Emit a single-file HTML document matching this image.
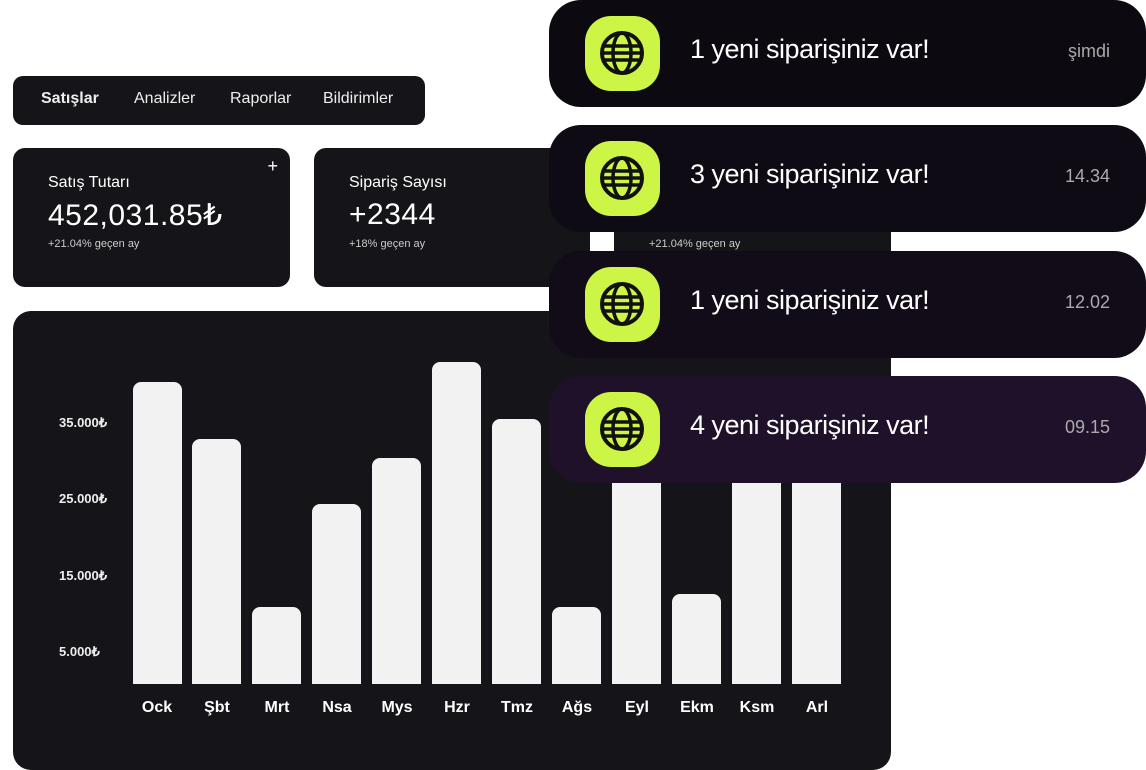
<!DOCTYPE html>
<html><head><meta charset="utf-8"><style>
*{margin:0;padding:0;box-sizing:border-box}
body{width:1146px;height:770px;background:#fff;position:relative;overflow:hidden;font-family:"Liberation Sans",sans-serif;color:#fff}
.abs{position:absolute}
.dk{background:#151419}
.tabs{left:13px;top:76px;width:412px;height:49px;border-radius:10px}
.tabs span{position:absolute;top:14px;font-size:16px;color:#eee}
.card{top:148px;height:139px;width:277px;border-radius:12px}
.card .t{position:absolute;left:35px;top:26px;font-size:16px}
.card .v{position:absolute;left:35px;top:50px;font-size:30px;letter-spacing:0.5px}
.card .s{position:absolute;left:35px;top:90px;font-size:11px;color:#ccc}
.chart{left:13px;top:311px;width:878px;height:459px;border-radius:18px}
.bar{position:absolute;width:49px;background:#f2f2f2;border-radius:8px 8px 0 0;bottom:86px}
.lab{position:absolute;top:388px;width:60px;text-align:center;font-weight:bold;font-size:16px}
.yl{position:absolute;left:46px;font-size:13px;font-weight:bold;color:#eee}
.n{left:549px;width:597px;height:107px;border-radius:32px}
.ic{position:absolute;left:36px;top:16px;width:75px;height:75px;border-radius:26px;background:#cdf545}
.ic svg{position:absolute;left:15px;top:15px}
.n .m{position:absolute;left:141px;top:34px;font-size:27px;letter-spacing:-0.5px}
.n .tm{position:absolute;right:36px;top:41px;font-size:18px;color:#aaa}
</style></head><body>
<div class="abs dk tabs"><span style="left:28px;font-weight:bold">Satışlar</span><span style="left:121px">Analizler</span><span style="left:217px">Raporlar</span><span style="left:310px">Bildirimler</span></div>
<div class="abs dk card" style="left:13px"><div class="t">Satış Tutarı</div><div class="v">452,031.85₺</div><div class="s">+21.04% geçen ay</div><div style="position:absolute;right:12px;top:8px;font-size:18px">+</div></div>
<div class="abs dk card" style="left:314px;width:276px"><div class="t">Sipariş Sayısı</div><div class="v">+2344</div><div class="s">+18% geçen ay</div></div>
<div class="abs dk card" style="left:614px"><div class="s">+21.04% geçen ay</div></div>
<div class="abs dk chart">
<div class="yl" style="top:104px">35.000₺</div><div class="yl" style="top:180px">25.000₺</div><div class="yl" style="top:257px">15.000₺</div><div class="yl" style="top:333px">5.000₺</div>
<div class="bar" style="left:120px;top:71px"></div>
<div class="bar" style="left:179px;top:128px"></div>
<div class="bar" style="left:239px;top:296px"></div>
<div class="bar" style="left:299px;top:193px"></div>
<div class="bar" style="left:359px;top:147px"></div>
<div class="bar" style="left:419px;top:51px"></div>
<div class="bar" style="left:479px;top:108px"></div>
<div class="bar" style="left:539px;top:296px"></div>
<div class="bar" style="left:599px;top:100px"></div>
<div class="bar" style="left:659px;top:283px"></div>
<div class="bar" style="left:719px;top:100px"></div>
<div class="bar" style="left:779px;top:100px"></div>
<div class="lab" style="left:114px">Ock</div><div class="lab" style="left:174px">Şbt</div><div class="lab" style="left:234px">Mrt</div><div class="lab" style="left:294px">Nsa</div><div class="lab" style="left:354px">Mys</div><div class="lab" style="left:414px">Hzr</div><div class="lab" style="left:474px">Tmz</div><div class="lab" style="left:534px">Ağs</div><div class="lab" style="left:594px">Eyl</div><div class="lab" style="left:654px">Ekm</div><div class="lab" style="left:714px">Ksm</div><div class="lab" style="left:774px">Arl</div>
</div>
<svg width="0" height="0" style="position:absolute"><defs><g id="g"><circle cx="22" cy="22" r="20" fill="none" stroke="#111" stroke-width="4"/><ellipse cx="22" cy="22" rx="9" ry="20" fill="none" stroke="#111" stroke-width="3.5"/><path d="M4 15H40M2 22H42M4 29H40" stroke="#111" stroke-width="3.5"/></g></defs></svg>
<div class="abs n" style="top:0;background:#0c0a10"><div class="ic"><svg width="44" height="44"><use href="#g"/></svg></div><div class="m">1 yeni siparişiniz var!</div><div class="tm">şimdi</div></div>
<div class="abs n" style="top:125px;background:#0f0b15"><div class="ic"><svg width="44" height="44"><use href="#g"/></svg></div><div class="m">3 yeni siparişiniz var!</div><div class="tm">14.34</div></div>
<div class="abs n" style="top:251px;background:#120c19"><div class="ic"><svg width="44" height="44"><use href="#g"/></svg></div><div class="m">1 yeni siparişiniz var!</div><div class="tm">12.02</div></div>
<div class="abs n" style="top:376px;background:#1f1129"><div class="ic"><svg width="44" height="44"><use href="#g"/></svg></div><div class="m">4 yeni siparişiniz var!</div><div class="tm">09.15</div></div>
</body></html>
